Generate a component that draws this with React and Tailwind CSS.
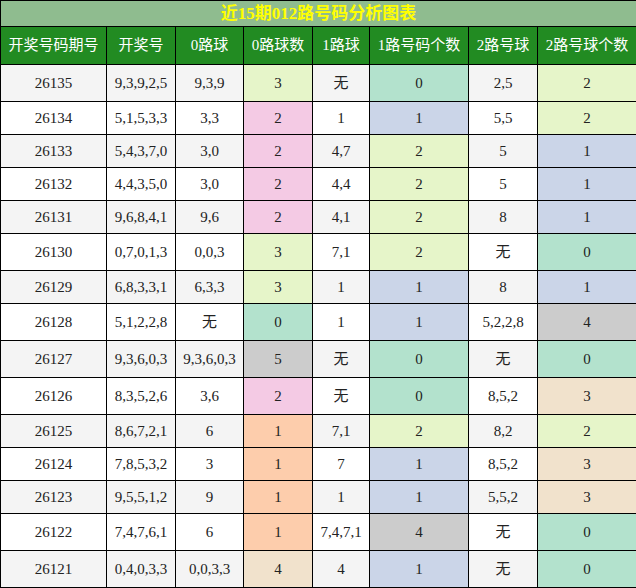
import React from 'react';

// 颜色（按单元格写死）
const C = {
  g: 'bg-[#e6f5c9]',
  p: 'bg-[#f4cae4]',
  t: 'bg-[#b3e2cd]',
  b: 'bg-[#cbd5e8]',
  x: 'bg-[#cccccc]',
  o: 'bg-[#fdcdac]',
  e: 'bg-[#f1e2cc]',
};

const rows = [
  ['26135', '9,3,9,2,5', '9,3,9', '3', 'g', '无', '0', 't', '2,5', '2', 'g'],
  ['26134', '5,1,5,3,3', '3,3', '2', 'p', '1', '1', 'b', '5,5', '2', 'g'],
  ['26133', '5,4,3,7,0', '3,0', '2', 'p', '4,7', '2', 'g', '5', '1', 'b'],
  ['26132', '4,4,3,5,0', '3,0', '2', 'p', '4,4', '2', 'g', '5', '1', 'b'],
  ['26131', '9,6,8,4,1', '9,6', '2', 'p', '4,1', '2', 'g', '8', '1', 'b'],
  ['26130', '0,7,0,1,3', '0,0,3', '3', 'g', '7,1', '2', 'g', '无', '0', 't'],
  ['26129', '6,8,3,3,1', '6,3,3', '3', 'g', '1', '1', 'b', '8', '1', 'b'],
  ['26128', '5,1,2,2,8', '无', '0', 't', '1', '1', 'b', '5,2,2,8', '4', 'x'],
  ['26127', '9,3,6,0,3', '9,3,6,0,3', '5', 'x', '无', '0', 't', '无', '0', 't'],
  ['26126', '8,3,5,2,6', '3,6', '2', 'p', '无', '0', 't', '8,5,2', '3', 'e'],
  ['26125', '8,6,7,2,1', '6', '1', 'o', '7,1', '2', 'g', '8,2', '2', 'g'],
  ['26124', '7,8,5,3,2', '3', '1', 'o', '7', '1', 'b', '8,5,2', '3', 'e'],
  ['26123', '9,5,5,1,2', '9', '1', 'o', '1', '1', 'b', '5,5,2', '3', 'e'],
  ['26122', '7,4,7,6,1', '6', '1', 'o', '7,4,7,1', '4', 'x', '无', '0', 't'],
  ['26121', '0,4,0,3,3', '0,0,3,3', '4', 'e', '4', '1', 'b', '无', '0', 't'],
];

const heads = ['开奖号码期号', '开奖号', '0路球', '0路球数', '1路球', '1路号码个数', '2路号球', '2路号球个数'];
const widths = ['w-[106px]', 'w-[69px]', 'w-[68px]', 'w-[69px]', 'w-[57px]', 'w-[99px]', 'w-[69px]', 'w-[99px]'];

// 含“无”的行稍高一些
const Td = ({ children, tall, cls = '' }) => (
  <td className={`border border-black px-0 py-2 text-center text-[15px] text-[#222] ${tall ? 'leading-[20px]' : 'leading-[16px]'} ${cls}`}>
    {children}
  </td>
);

export default function App() {
  return (
    <div className="w-[636px] font-['Liberation_Serif','Noto_Sans_CJK_SC',serif]">
      <table className="w-[636px] table-fixed border-collapse">
        <colgroup>
          {widths.map((w, i) => <col key={i} className={w} />)}
        </colgroup>
        <thead>
          <tr>
            <th colSpan={8} className="border border-black bg-[#8fbc8f] py-0 text-center text-[17px] font-bold leading-[25px] text-[#ffff00]">
              近15期012路号码分析图表
            </th>
          </tr>
          <tr>
            {heads.map((h) => (
              <th key={h} className="border border-black bg-[#228b22] px-0 py-[7px] text-center text-[15px] font-normal leading-normal text-white">
                {h}
              </th>
            ))}
          </tr>
        </thead>
        <tbody>
          {rows.map((r, i) => {
            const bg = i % 2 === 0 ? 'bg-[#f4f4f4]' : 'bg-white';
            const tall = r.includes('无');
            return (
              <tr key={r[0]} className={bg}>
                <Td tall={tall}>{r[0]}</Td>
                <Td tall={tall}>{r[1]}</Td>
                <Td tall={tall}>{r[2]}</Td>
                <Td tall={tall} cls={C[r[4]]}>{r[3]}</Td>
                <Td tall={tall}>{r[5]}</Td>
                <Td tall={tall} cls={C[r[7]]}>{r[6]}</Td>
                <Td tall={tall}>{r[8]}</Td>
                <Td tall={tall} cls={C[r[10]]}>{r[9]}</Td>
              </tr>
            );
          })}
        </tbody>
      </table>
    </div>
  );
}
